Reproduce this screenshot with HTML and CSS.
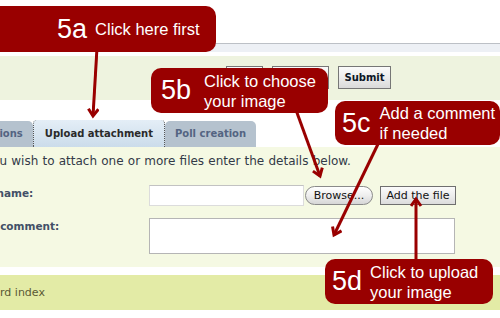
FILE: index.html
```html
<!DOCTYPE html>
<html>
<head>
<meta charset="utf-8">
<title>Upload attachment</title>
<link rel="stylesheet" href="styles.css">
</head>
<body>
<div class="page">
  <div class="topspace"></div>
  <div class="strip"></div>
  <div class="actions">
    <button class="btn b1" aria-label="Save draft"></button>
    <button class="btn b2" aria-label="Preview"></button>
    <button class="btn submit">Submit</button>
  </div>
  <ul class="tabs">
    <li class="tab">Options</li>
    <li class="tab active">Upload attachment</li>
    <li class="tab">Poll creation</li>
  </ul>
  <div class="panel">
    <p class="intro">If you wish to attach one or more files enter the details below.</p>
    <div class="row row-file">
      <label class="lbl">Filename:</label>
      <div class="field">
        <input class="file-input" type="text">
        <button class="browse">Browse...</button>
        <button class="addfile">Add the file</button>
      </div>
    </div>
    <div class="row row-comment">
      <label class="lbl">File comment:</label>
      <div class="field">
        <textarea class="comment"></textarea>
      </div>
    </div>
  </div>
  <div class="footer"><span class="footlink">Board index</span></div>
</div>

<svg class="arrows" width="500" height="318" viewBox="0 0 500 318">
  <defs>
    <marker id="head" markerUnits="userSpaceOnUse" markerWidth="14" markerHeight="14" refX="9" refY="6" orient="auto">
      <path d="M2,1 L9,6 L2,11" fill="none" stroke="#990000" stroke-width="3" stroke-linejoin="miter"/>
    </marker>
  </defs>
  <line x1="97" y1="48" x2="93" y2="116" stroke="#990000" stroke-width="3" marker-end="url(#head)"/>
  <line x1="296" y1="110" x2="320" y2="176" stroke="#990000" stroke-width="3" marker-end="url(#head)"/>
  <line x1="379" y1="142" x2="334" y2="235" stroke="#990000" stroke-width="3" marker-end="url(#head)"/>
  <line x1="416" y1="262" x2="416" y2="199" stroke="#990000" stroke-width="3" marker-end="url(#head)"/>
</svg>

<div class="callout c5a"><span class="num">5a</span><span class="msg">Click here first</span></div>
<div class="callout c5b"><span class="num">5b</span><span class="msg">Click to choose<br>your image</span></div>
<div class="callout c5c"><span class="num">5c</span><span class="msg">Add a comment<br>if needed</span></div>
<div class="callout c5d"><span class="num">5d</span><span class="msg">Click to upload<br>your image</span></div>
</body>
</html>
```

FILE: styles.css
```css
html, body {
  margin: 0;
  padding: 0;
}
body {
  width: 500px;
  height: 318px;
  overflow: hidden;
  position: relative;
  background: #ffffff;
  font-family: "DejaVu Sans", Verdana, sans-serif;
  color: #333333;
}
.page {
  width: 500px;
}
.topspace {
  height: 43px;
}
.strip {
  height: 8px;
  border-top: 1px solid #bcc0c6;
  background: #edf0f5;
}
.actions {
  margin-top: 4px;
  height: 44px;
  box-sizing: border-box;
  padding: 10px 0 0 226px;
  background: #eef3df;
  display: flex;
  align-items: flex-start;
  gap: 9px;
}
.btn {
  height: 23px;
  padding: 0;
  border: 1px solid #767676;
  background: linear-gradient(#fbfbfb, #ececec 50%, #dadada);
  font-family: "DejaVu Sans", Verdana, sans-serif;
  font-size: 11px;
  color: #111;
}
.b1 { width: 37px; }
.b2 { width: 57px; }
.submit {
  width: 53px;
  font-weight: bold;
  font-size: 10px;
  color: #0c1626;
}
.tabs {
  list-style: none;
  margin: 20px 0 0 -31px;
  padding: 0;
  display: flex;
  height: 27px;
}
.tab {
  height: 26px;
  margin-top: 1px;
  line-height: 26px;
  padding: 0 10px;
  background: #b5c2ce;
  border-radius: 5px 5px 0 0;
  font-size: 10px;
  font-weight: bold;
  color: #536482;
  white-space: nowrap;
}
.tab.active {
  height: 27px;
  margin-top: 0;
  line-height: 28px;
  padding: 0 11px;
  border-left: 1px dotted #555;
  border-right: 1px dotted #555;
  border-radius: 4px 4px 0 0;
  background: linear-gradient(#e4eef7, #cbdcea);
  color: #2a2a2a;
}
.panel {
  height: 120px;
  background: #f5f9e3;
  overflow: hidden;
}
.intro {
  margin: 0 0 0 -27px;
  padding-top: 7px;
  font-size: 12px;
  line-height: 15px;
  word-spacing: 0.4px;
  color: #333a47;
  white-space: nowrap;
}
.row {
  display: flex;
  align-items: flex-start;
  margin-left: -25px;
}
.row-file {
  margin-top: 16px;
}
.row-comment {
  margin-top: 12px;
}
.lbl {
  width: 174px;
  flex: none;
  font-size: 10.5px;
  font-weight: bold;
  line-height: 16px;
  color: #425067;
  white-space: nowrap;
}
.field {
  display: flex;
  align-items: center;
  height: 21px;
}
.file-input {
  width: 155px;
  height: 21px;
  box-sizing: border-box;
  margin: 0;
  border: 1px solid #dcdcdc;
  border-top-color: #c2c2c2;
  background: #fff;
}
.browse {
  margin-left: 1px;
  width: 68px;
  height: 19px;
  padding: 0;
  border: 1px solid #8a8a8a;
  border-radius: 10px;
  background: linear-gradient(#ffffff, #eeeeee 50%, #d6d6d6);
  font-family: "DejaVu Sans", Verdana, sans-serif;
  font-size: 11px;
  color: #111;
}
.addfile {
  margin-left: 7px;
  width: 76px;
  height: 19px;
  padding: 0;
  border: 1px solid #6f6f6f;
  background: linear-gradient(#fbfbfb, #ededed 50%, #dcdcdc);
  font-family: "DejaVu Sans", Verdana, sans-serif;
  font-size: 11px;
  color: #111;
}
.row-comment .field {
  height: 36px;
}
.comment {
  width: 306px;
  height: 36px;
  box-sizing: border-box;
  margin: 0;
  border: 1px solid #b5b5b5;
  background: #fff;
  resize: none;
}
.footer {
  margin-top: 8px;
  height: 35px;
  line-height: 35px;
  background: #e3eba6;
  font-size: 11px;
  color: #5a5934;
  white-space: nowrap;
}
.footlink {
  margin-left: -21px;
}
.arrows {
  position: absolute;
  left: 0;
  top: 0;
  pointer-events: none;
}
.callout {
  position: absolute;
  box-sizing: border-box;
  display: flex;
  align-items: center;
  background: #990000;
  color: #ffffff;
  border-radius: 10px;
  font-family: "Liberation Sans", Arial, Helvetica, sans-serif;
  white-space: nowrap;
}
.num {
  font-size: 27px;
  line-height: 1;
}
.msg {
  font-size: 16.5px;
  line-height: 20px;
}
.c5a {
  left: -10px;
  top: 6px;
  width: 226px;
  height: 46px;
  padding-left: 67px;
  gap: 8px;
}
.c5b {
  left: 151px;
  top: 68px;
  width: 177px;
  height: 45px;
  padding-left: 10px;
  gap: 13px;
}
.c5c {
  left: 335px;
  top: 101px;
  width: 165px;
  height: 44px;
  padding-left: 7px;
  gap: 9px;
}
.c5d {
  left: 325px;
  top: 259px;
  width: 168px;
  height: 45px;
  padding-left: 7px;
  gap: 8px;
}
```
